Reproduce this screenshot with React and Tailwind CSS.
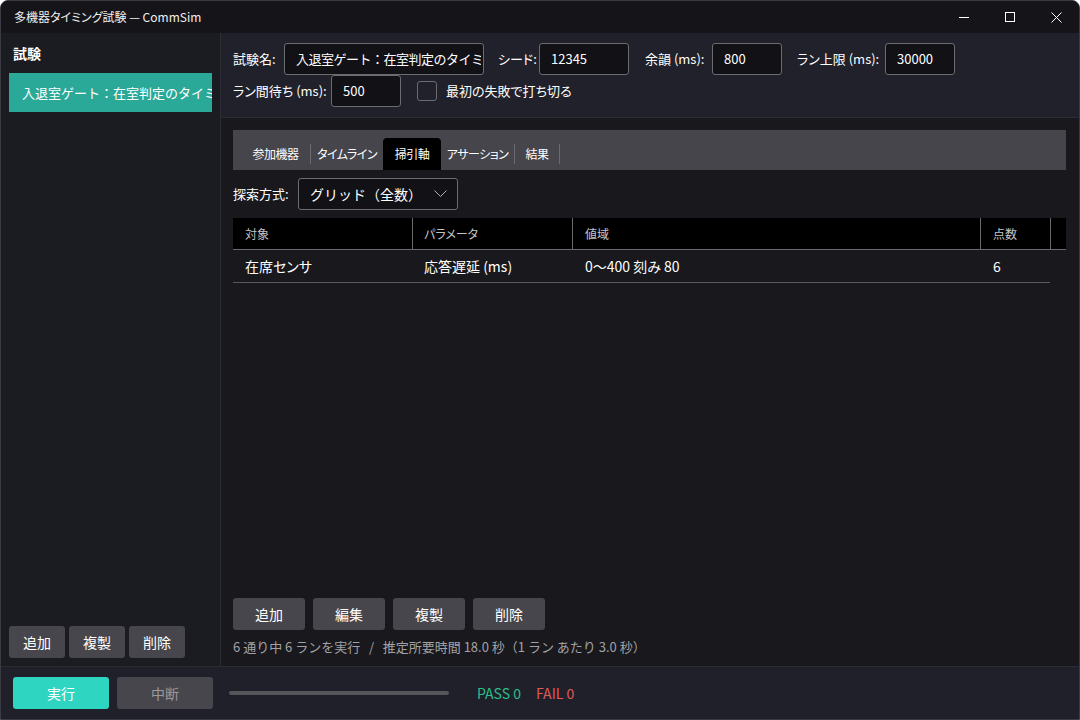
import React from "react";

const P = "[font-feature-settings:'palt']";

function Input({ w, value, cls = "px-[11px]" }) {
  return (
    <div className={`${w} h-[32px] shrink-0 flex items-center bg-[#111116] border border-[#6b6b70] rounded-[3px] text-[13px] text-white overflow-hidden whitespace-nowrap ${cls}`}>
      <span className="overflow-hidden">{value}</span>
    </div>
  );
}

function Label({ w, pl = "pl-0", children }) {
  return <div className={`${w} ${pl} shrink-0 whitespace-nowrap ${P}`}>{children}</div>;
}

function Btn({ children, w = "w-[72px]", cls = "bg-[#47464c] text-white" }) {
  return (
    <div className={`${w} h-[32px] shrink-0 flex items-center justify-center rounded-[3px] text-[14px] ${cls}`}>
      {children}
    </div>
  );
}

export default function App() {
  const tabs = [
    { t: "参加機器", w: "w-[69px]", sep: true },
    { t: "タイムライン", w: "w-[72px]", sep: false },
    { t: "掃引軸", w: "w-[58px]", sel: true, sep: false },
    { t: "アサーション", w: "w-[73px]", sep: true },
    { t: "結果", w: "w-[44px]", sep: true },
  ];
  return (
    <div className="w-[1080px] h-[720px] flex flex-col bg-[#1b1c22] border border-[#3a3a40] rounded-t-[8px] overflow-hidden text-white font-['Noto_Sans_CJK_JP','Noto_Sans',sans-serif]">
      {/* title bar */}
      <div className="h-[32px] flex items-center bg-[#141419] shrink-0">
        <div className={`pl-[13px] text-[12px] text-[#f0f0f0] flex-1 ${P}`}>多機器タイミング試験 — CommSim</div>
        <div className="flex h-full">
          <div className="w-[46px] h-full flex items-center justify-center">
            <div className="w-[10px] h-[1px] bg-white" />
          </div>
          <div className="w-[46px] h-full flex items-center justify-center">
            <div className="w-[10px] h-[10px] border border-white" />
          </div>
          <div className="w-[46px] h-full flex items-center justify-center">
            <svg width="11" height="11" viewBox="0 0 11 11"><path d="M0.5 0.5L10.5 10.5M10.5 0.5L0.5 10.5" stroke="white" strokeWidth="1" /></svg>
          </div>
        </div>
      </div>

      {/* main */}
      <div className="flex flex-1 min-h-0">
        {/* sidebar */}
        <div className="w-[220px] shrink-0 border-r border-[#2c2d34] bg-[#1b1c22] flex flex-col px-[8px] pb-[8px]">
          <div className="h-[40px] flex items-center pl-[4px] text-[14px] font-bold">試験</div>
          <div className="h-[39px] bg-[#2aa898] flex items-center pl-[13px] text-[13px] whitespace-nowrap overflow-hidden">
            入退室ゲート：在室判定のタイミ
          </div>
          <div className="flex-1" />
          <div className="flex gap-[4px]">
            <Btn w="w-[56px]">追加</Btn>
            <Btn w="w-[56px]">複製</Btn>
            <Btn w="w-[56px]">削除</Btn>
          </div>
        </div>

        {/* right */}
        <div className="flex-1 flex flex-col min-w-0">
          <div className="h-[85px] shrink-0 bg-[#20212a] border-b border-[#2c2d34] pt-[10px] pl-[12px] flex flex-col text-[13px]">
            <div className="flex items-center h-[32px]">
              <Label w="w-[51px]">試験名:</Label>
              <Input w="w-[200px]" cls="pl-[11px] pr-[2px] tracking-[-0.5px]" value="入退室ゲート：在室判定のタイミ" />
              <Label w="w-[55px]" pl="pl-[14px]">シード:</Label>
              <Input w="w-[90px]" value="12345" />
              <Label w="w-[83px]" pl="pl-[16px]">余韻 (ms):</Label>
              <Input w="w-[70px]" value="800" />
              <Label w="w-[103px]" pl="pl-[15px]">ラン上限 (ms):</Label>
              <Input w="w-[70px]" value="30000" />
            </div>
            <div className="flex items-center h-[32px]">
              <Label w="w-[98px]">ラン間待ち (ms):</Label>
              <Input w="w-[70px]" value="500" />
              <div className="ml-[16px] w-[20px] h-[20px] border border-[#6b6b70] rounded-[3px]" />
              <span className={`ml-[9px] ${P}`}>最初の失敗で打ち切る</span>
            </div>
          </div>

          <div className="flex-1 flex flex-col bg-[#18181d] pl-[12px] pr-[13px] pt-[12px] pb-[10px] min-h-0">
            {/* tabs */}
            <div className={`h-[40px] bg-[#45454b] flex items-end pl-[8px] text-[12px] tracking-[-0.5px] ${P}`}>
              {tabs.map((tb) => (
                <div key={tb.t} className="h-[32px] flex items-center">
                  <div className={`${tb.w} h-[32px] flex items-center justify-center whitespace-nowrap ${tb.sel ? "bg-black rounded-t-[4px]" : ""}`}>{tb.t}</div>
                  {tb.sep && <div className="w-[1px] h-[20px] bg-[#6a6a70]" />}
                </div>
              ))}
            </div>

            <div className="flex items-center mt-[8px] h-[32px] text-[13px]">
              <Label w="w-[65px]">探索方式:</Label>
              <div className="w-[160px] h-[32px] flex items-center pl-[11px] pr-[10px] bg-[#111116] border border-[#6b6b70] rounded-[3px]">
                <span className="flex-1 text-[14px]">グリッド（全数）</span>
                <svg width="13" height="8" viewBox="0 0 13 8"><path d="M0.5 0.5L6.5 6.5L12.5 0.5" stroke="#b0b0b4" strokeWidth="1" fill="none" /></svg>
              </div>
            </div>

            {/* table */}
            <div className={`mt-[8px] grid grid-cols-[179px_160px_408px_70px_1fr] ${P}`}>
              <div className="h-[32px] bg-black border-b border-[#6a6a6e] flex items-center pl-[12px] text-[12px] text-[#c4c4c8]">対象</div>
              <div className="h-[32px] bg-black border-b border-l border-[#6a6a6e] flex items-center pl-[11px] text-[12px] text-[#c4c4c8]">パラメータ</div>
              <div className="h-[32px] bg-black border-b border-l border-[#6a6a6e] flex items-center pl-[12px] text-[12px] text-[#c4c4c8]">値域</div>
              <div className="h-[32px] bg-black border-b border-l border-[#6a6a6e] flex items-center pl-[12px] text-[12px] text-[#c4c4c8]">点数</div>
              <div className="h-[32px] bg-black border-b border-l border-[#6a6a6e]" />
              <div className="h-[33px] border-b border-[#5a5a5e] flex items-center pl-[12px] text-[14px]">在席センサ</div>
              <div className="h-[33px] border-b border-[#5a5a5e] flex items-center pl-[12px] text-[14px]">応答遅延 (ms)</div>
              <div className="h-[33px] border-b border-[#5a5a5e] flex items-center pl-[13px] text-[14px]">0〜400 刻み 80</div>
              <div className="h-[33px] border-b border-[#5a5a5e] flex items-center pl-[13px] text-[14px]">6</div>
              <div className="h-[33px]" />
            </div>

            <div className="flex-1" />
            <div className="flex gap-[8px]">
              <Btn>追加</Btn>
              <Btn>編集</Btn>
              <Btn>複製</Btn>
              <Btn>削除</Btn>
            </div>
            <div className="mt-[8px] h-[18px] flex items-center text-[13px] text-[#a2a2a6] whitespace-pre">
              6 通り中 6 ランを実行   /   推定所要時間 18.0 秒（1 ラン あたり 3.0 秒）
            </div>
          </div>
        </div>
      </div>

      {/* bottom bar */}
      <div className="h-[53px] shrink-0 bg-[#1f2029] border-t border-[#2c2d34] flex items-center pl-[12px]">
        <Btn w="w-[96px]" cls="bg-[#2ed5c1] text-white">実行</Btn>
        <div className="ml-[8px]"><Btn w="w-[96px]" cls="bg-[#47464c] text-[#9a9a9e]">中断</Btn></div>
        <div className="ml-[16px] w-[220px] h-[4px] rounded-full bg-[#55555a]" />
        <span className="ml-[28px] text-[14px] text-[#2dbf8c]">PASS 0</span>
        <span className="ml-[15px] text-[14px] text-[#e05a5a]">FAIL 0</span>
      </div>
    </div>
  );
}
